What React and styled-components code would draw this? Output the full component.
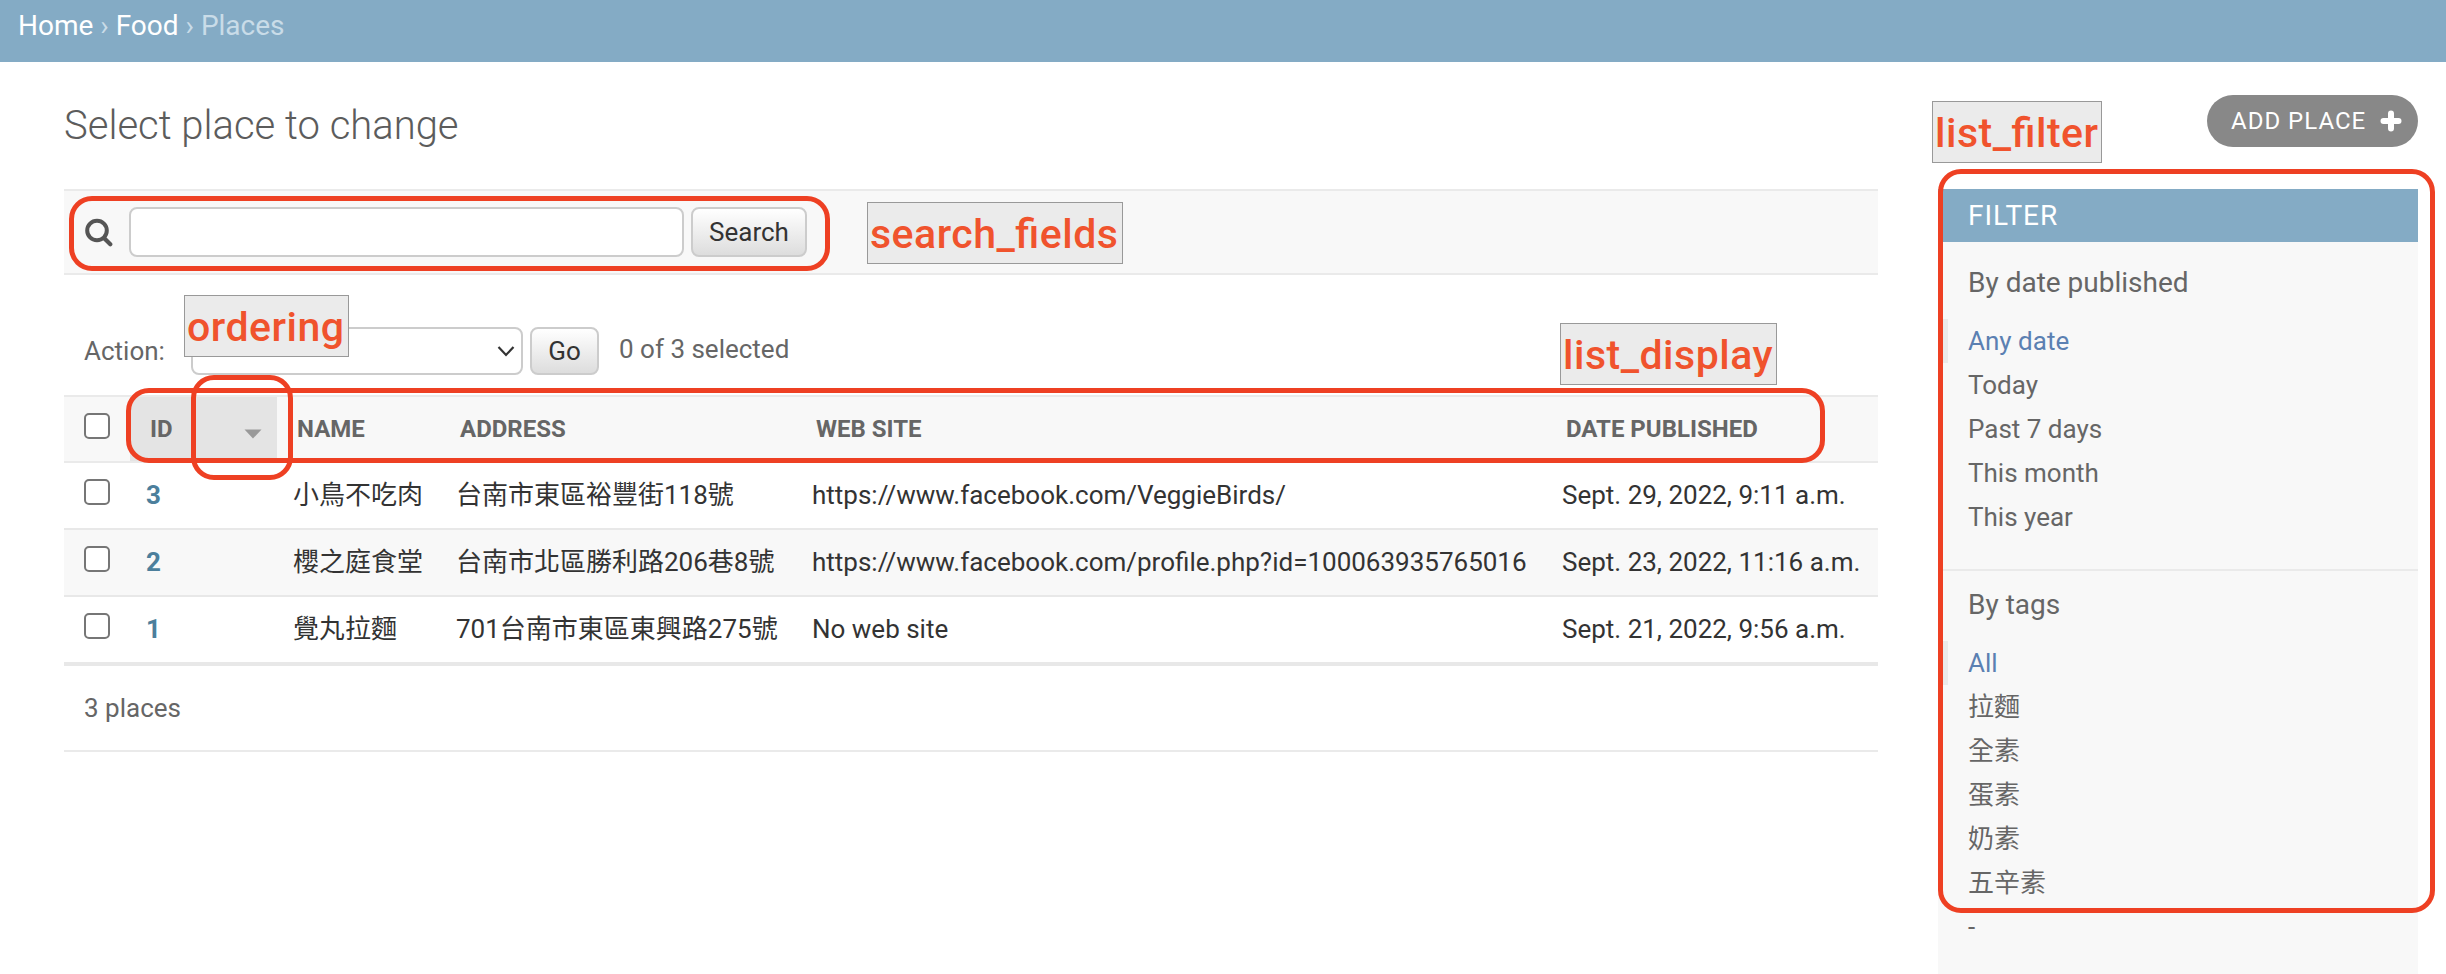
import React from "react";
import styled, { createGlobalStyle, css } from "styled-components";

const Global = createGlobalStyle`
  * { box-sizing: border-box; }
  body {
    margin: 0;
    background: #fff;
    color: #333;
    font-family: Roboto, "Noto Sans CJK TC", sans-serif;
    font-size: 26px;
    line-height: 30px;
    overflow: hidden;
  }
`;

const Page = styled.div`
  position: relative;
  width: 2446px;
  height: 974px;
  overflow: hidden;
`;
const Breadcrumbs = styled.nav`
  height: 62px;
  padding: 10px 18px 0;
  background: #84abc5;
  color: #c9dce8;
  font-size: 28px;
  line-height: 32px;
  white-space: pre;
`;
const Crumb = styled.a`
  color: #fff;
`;
const Body = styled.div`
  display: flex;
  justify-content: space-between;
  padding: 0 28px 0 64px;
`;
const Main = styled.main`
  width: 1814px;
`;
const Title = styled.h1`
  margin: 0;
  padding-top: 41px;
  height: 127px;
  font-size: 40px;
  font-weight: 300;
  line-height: 46px;
  color: #5c5c5c;
`;
const Toolbar = styled.form`
  display: flex;
  align-items: center;
  height: 86px;
  padding: 0 20px;
  background: #f8f8f8;
  border: solid #eaeaea;
  border-width: 2px 0;
`;
const SearchIcon = styled.svg`
  width: 30px;
  height: 30px;
  margin-right: 15px;
`;
const SearchInput = styled.input`
  width: 555px;
  height: 50px;
  margin: 0 7px 0 0;
  border: 2px solid #ccc;
  border-radius: 8px;
  background: #fff;
`;
const Button = styled.button`
  width: ${(p) => p.$w}px;
  height: ${(p) => p.$h}px;
  padding: 0;
  border: 2px solid #ccc;
  border-radius: 8px;
  background: linear-gradient(#fff, #ddd);
  color: #333;
  font: 26px/30px Roboto, sans-serif;
`;
const Actions = styled.div`
  display: flex;
  align-items: flex-start;
  height: 120px;
  padding: 52px 20px 0;
  color: #666;
`;
const ActionLabel = styled.label`
  width: 107px;
  padding-top: 9px;
`;
const ActionSelect = styled.div`
  display: flex;
  align-items: center;
  justify-content: flex-end;
  width: 332px;
  height: 48px;
  margin-right: 7px;
  padding-right: 6px;
  border: 2px solid #ccc;
  border-radius: 8px;
  background: #fff;
`;
const Counter = styled.span`
  padding: 7px 0 0 20px;
`;
const columns = css`
  display: grid;
  grid-template-columns: 66px 147px 162px 356px 750px 1fr;
`;
const HeadRow = styled.div`
  ${columns}
  height: 68px;
  background: #f8f8f8;
  border: solid #eaeaea;
  border-width: 2px 0;
  color: #666;
  font-size: 24px;
  font-weight: 700;
`;
const HeadCell = styled.div`
  display: flex;
  align-items: center;
  justify-content: space-between;
  padding: 0 15px 0 ${(p) => p.$pad || 21}px;
  background: ${(p) => (p.$sorted ? "#e4e4e4" : "none")};
`;
const SortArrow = styled.svg`
  width: 18px;
  height: 10px;
  margin-top: 9px;
`;
const Row = styled.div`
  ${columns}
  height: ${(p) => (p.$last ? 69 : 67)}px;
  background: ${(p) => (p.$alt ? "#f8f8f8" : "#fff")};
  border-bottom: ${(p) => (p.$last ? 4 : 2)}px solid #e8e8e8;
`;
const CheckCell = styled.div`
  padding: 16px 0 0 20px;
`;
const Checkbox = styled.input`
  display: block;
  appearance: none;
  width: 26px;
  height: 26px;
  margin: 0;
  border: 2px solid #767676;
  border-radius: 5px;
  background: #fff;
`;
const Cell = styled.div`
  padding: 17px 0 0 ${(p) => p.$pad || 17}px;
  white-space: nowrap;
`;
const IdLink = styled.a`
  color: #4c7f9c;
  font-weight: 700;
`;
const Paginator = styled.p`
  height: 86px;
  margin: 0;
  padding: 27px 20px 0;
  border-bottom: 2px solid #eaeaea;
  color: #666;
  line-height: 30px;
`;
const Side = styled.aside`
  display: flex;
  flex-direction: column;
  width: 480px;
`;
const AddLink = styled.a`
  display: flex;
  align-items: center;
  justify-content: space-between;
  align-self: flex-end;
  width: 211px;
  height: 52px;
  margin: 33px 0 42px;
  padding: 0 16px 0 24px;
  border-radius: 26px;
  background: #888;
  color: #fff;
  font-size: 24px;
  letter-spacing: 1px;
`;
const PlusIcon = styled.svg`
  width: 22px;
  height: 22px;
`;
const FilterPanel = styled.section`
  height: 785px;
  background: #f8f8f8;
`;
const FilterTitle = styled.h2`
  height: 53px;
  margin: 0;
  padding: 11px 30px 0;
  background: #84abc5;
  color: #fff;
  font-size: 28px;
  font-weight: 400;
  line-height: 32px;
  letter-spacing: 1px;
`;
const FilterGroup = styled.div`
  padding-top: ${(p) => p.$top}px;
  height: ${(p) => p.$h}px;
  border-bottom: ${(p) => (p.$line ? "2px solid #eaeaea" : "none")};
`;
const FilterName = styled.h3`
  margin: 0 0 20px;
  padding: 0 30px;
  font-size: 28px;
  font-weight: 400;
  line-height: 32px;
  color: #666;
`;
const Choices = styled.ul`
  margin: 0;
  padding: 0;
  list-style: none;
`;
const Choice = styled.li`
  height: 44px;
  padding-left: ${(p) => (p.$selected ? 20 : 30)}px;
  border-left: ${(p) => (p.$selected ? "10px solid #eaeaea" : "none")};
  color: ${(p) => (p.$selected ? "#5b80b2" : "#666")};
  line-height: 44px;
`;
const Outline = styled.div`
  position: absolute;
  left: ${(p) => p.$x}px;
  top: ${(p) => p.$y}px;
  width: ${(p) => p.$w}px;
  height: ${(p) => p.$h}px;
  border: 5px solid #ee4023;
  border-radius: 23px;
`;
const Note = styled.div`
  position: absolute;
  left: ${(p) => p.$x}px;
  top: ${(p) => p.$y}px;
  width: ${(p) => p.$w}px;
  height: 62px;
  padding: 1px 0 0 2px;
  border: 1px solid #999;
  background: #ebebeb;
  color: #f0532d;
  font: 500 41px/60px Roboto, sans-serif;
  letter-spacing: 0.5px;
  font-feature-settings: "liga" 1;
  white-space: nowrap;
`;

const places = [
  ["3", "小鳥不吃肉", "台南市東區裕豐街118號", "https://www.facebook.com/VeggieBirds/", "Sept. 29, 2022, 9:11 a.m."],
  ["2", "櫻之庭食堂", "台南市北區勝利路206巷8號", "https://www.facebook.com/profile.php?id=100063935765016", "Sept. 23, 2022, 11:16 a.m."],
  ["1", "覺丸拉麵", "701台南市東區東興路275號", "No web site", "Sept. 21, 2022, 9:56 a.m."],
];
const dates = ["Any date", "Today", "Past 7 days", "This month", "This year"];
const tags = ["All", "拉麵", "全素", "蛋素", "奶素", "五辛素", "-"];

function FilterChoices({ items }) {
  return (
    <Choices>
      {items.map((item, i) => (
        <Choice key={item} $selected={i === 0}>{item}</Choice>
      ))}
    </Choices>
  );
}

export default function App() {
  return (
    <Page>
      <Global />
      <Breadcrumbs>
        <Crumb>Home</Crumb> › <Crumb>Food</Crumb> › Places
      </Breadcrumbs>
      <Body>
        <Main>
          <Title>Select place to change</Title>
          <Toolbar>
            <SearchIcon viewBox="0 0 30 30" fill="none" stroke="#555" strokeLinecap="round">
              <circle cx="13" cy="13.5" r="9.8" strokeWidth="4" />
              <path d="M20.5 21.5L26.3 27.3" strokeWidth="4.2" />
            </SearchIcon>
            <SearchInput />
            <Button type="button" $w={116} $h={50}>Search</Button>
          </Toolbar>
          <Actions>
            <ActionLabel>Action:</ActionLabel>
            <ActionSelect>
              <svg width="18" height="12" viewBox="0 0 18 12" fill="none" stroke="#333" strokeWidth="2.2">
                <path d="M1.5 2L9 10L16.5 2" />
              </svg>
            </ActionSelect>
            <Button type="button" $w={69} $h={48}>Go</Button>
            <Counter>0 of 3 selected</Counter>
          </Actions>
          <HeadRow>
            <CheckCell><Checkbox type="checkbox" /></CheckCell>
            <HeadCell $sorted $pad={20}>
              ID
              <SortArrow viewBox="0 0 18 10"><path d="M0.5 0.5H17.5L9 9.5Z" fill="#999" /></SortArrow>
            </HeadCell>
            <HeadCell $pad={20}>NAME</HeadCell>
            <HeadCell>ADDRESS</HeadCell>
            <HeadCell>WEB SITE</HeadCell>
            <HeadCell>DATE PUBLISHED</HeadCell>
          </HeadRow>
          {places.map(([id, name, address, site, date], i) => (
            <Row key={id} $alt={i === 1} $last={i === 2}>
              <CheckCell><Checkbox type="checkbox" /></CheckCell>
              <Cell $pad={16}><IdLink>{id}</IdLink></Cell>
              <Cell $pad={16}>{name}</Cell>
              <Cell>{address}</Cell>
              <Cell>{site}</Cell>
              <Cell>{date}</Cell>
            </Row>
          ))}
          <Paginator>3 places</Paginator>
        </Main>
        <Side>
          <AddLink>
            ADD PLACE
            <PlusIcon viewBox="0 0 22 22" fill="none" stroke="#fff" strokeWidth="6" strokeLinecap="round">
              <path d="M11 3.5V18.5M3.5 11H18.5" />
            </PlusIcon>
          </AddLink>
          <FilterPanel>
            <FilterTitle>FILTER</FilterTitle>
            <FilterGroup $top={25} $h={329} $line>
              <FilterName>By date published</FilterName>
              <FilterChoices items={dates} />
            </FilterGroup>
            <FilterGroup $top={18} $h={403}>
              <FilterName>By tags</FilterName>
              <FilterChoices items={tags} />
            </FilterGroup>
          </FilterPanel>
        </Side>
      </Body>
      <Outline $x={69} $y={196} $w={761} $h={75} />
      <Outline $x={126} $y={388} $w={1699} $h={75} />
      <Outline $x={191} $y={375} $w={102} $h={105} />
      <Outline $x={1938} $y={169} $w={497} $h={744} />
      <Note $x={867} $y={202} $w={256}>search_fields</Note>
      <Note $x={184} $y={295} $w={165}>ordering</Note>
      <Note $x={1560} $y={323} $w={217}>list_display</Note>
      <Note $x={1932} $y={101} $w={170}>list_filter</Note>
    </Page>
  );
}
